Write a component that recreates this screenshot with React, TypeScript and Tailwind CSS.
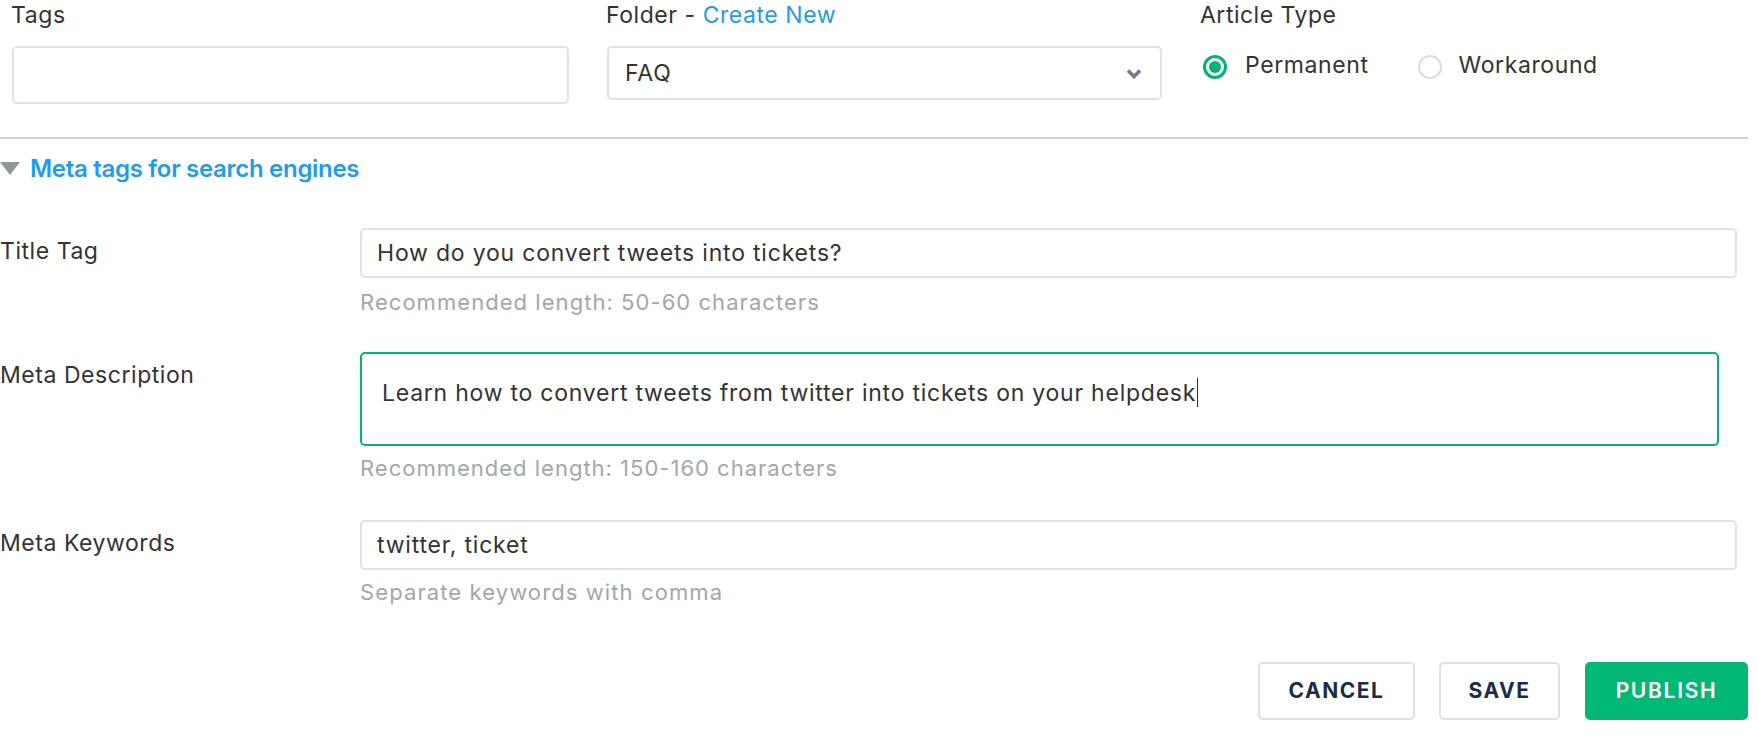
function Radio({ checked }: { checked?: boolean }) {
  if (checked) {
    return (
      <div className="flex h-[24px] w-[24px] items-center justify-center rounded-full border-[3px] border-[#00b574]">
        <div className="h-[12px] w-[12px] rounded-full bg-[#00b574]" />
      </div>
    );
  }
  return <div className="h-[24px] w-[24px] rounded-full border-2 border-[#d9dee3]" />;
}

function FormRow({ label, children }: { label: string; children: React.ReactNode }) {
  return (
    <div className="flex">
      <div className="w-[360px] pt-[8px] text-[23px] leading-[30px] tracking-[0.55px] text-[#333]">{label}</div>
      <div>{children}</div>
    </div>
  );
}

export default function App() {
  return (
    <div className="w-[1748px] bg-white font-['Inter','Noto_Sans',sans-serif] text-[#333]">
      {/* top row */}
      <div className="flex">
        <div className="w-[606px] pl-[11px]">
          <div className="h-[30px] text-[23px] leading-[30px] tracking-[0.6px]">Tags</div>
          <input
            readOnly
            className="ml-px mt-[16px] h-[58px] w-[557px] rounded-[5px] border-2 border-[#dfe3e7] outline-none"
          />
        </div>
        <div className="w-[594px]">
          <div className="h-[30px] text-[23px] leading-[30px] tracking-[0.55px]">
            Folder - <span className="text-[#1f9bf0]">Create New</span>
          </div>
          <div className="ml-[1px] mt-[16px] flex h-[54px] w-[555px] items-center justify-between rounded-[5px] border-2 border-[#dfe3e7] pl-[16px] pr-[18px]">
            <span className="text-[23px] tracking-[0.8px] text-[#333]">FAQ</span>
            <svg width="16" height="11" viewBox="0 0 16 11">
              <path d="M2 2.5 L8 8.5 L14 2.5" fill="none" stroke="#6f7d8b" strokeWidth="3.6" />
            </svg>
          </div>
        </div>
        <div className="flex-1">
          <div className="h-[30px] text-[23px] leading-[30px] tracking-[0.5px]">Article Type</div>
          <div className="mt-[25px] flex h-[24px] items-center pl-[3px] text-[23px] tracking-[0.6px]">
            <Radio checked />
            <span className="ml-[18px] -translate-y-[2px]">Permanent</span>
            <div className="ml-[49px]">
              <Radio />
            </div>
            <span className="ml-[17px] -translate-y-[2px]">Workaround</span>
          </div>
        </div>
      </div>

      <div className="mt-[33px] h-[2px] bg-[#d2d2d2]" />

      {/* meta toggle */}
      <div className="mt-[15px] flex h-[30px] items-center">
        <svg width="20" height="14" viewBox="0 0 20 14">
          <polygon points="0,0 20,0 10,13" fill="#8e9696" />
        </svg>
        <span className="ml-[10px] text-[24px] font-semibold tracking-[-0.3px] text-[#1f9bf0]">
          Meta tags for search engines
        </span>
      </div>

      <div className="mt-[44px]">
        <FormRow label="Title Tag">
          <input
            readOnly
            value="How do you convert tweets into tickets?"
            className="h-[50px] w-[1377px] rounded-[5px] border-2 border-[#dfe3e7] px-[15px] text-[23px] tracking-[0.8px] text-[#333] outline-none"
          />
          <div className="mt-[10px] text-[22px] leading-[28px] tracking-[1.05px] text-[#a1a7ad]">
            Recommended length: 50-60 characters
          </div>
        </FormRow>
      </div>

      <div className="mt-[36px]">
        <FormRow label="Meta Description">
          <div className="h-[94px] w-[1359px] rounded-[5px] border-2 border-[#00b574] pl-[20px] pt-[18px] text-[23px] leading-[30px] tracking-[0.76px] text-[#333]">
            Learn how to convert tweets from twitter into tickets on your helpdesk
            <span className="ml-px inline-block h-[29px] w-px translate-y-[6px] bg-[#333]" />
          </div>
          <div className="mt-[8px] text-[22px] leading-[28px] tracking-[1px] text-[#a1a7ad]">
            Recommended length: 150-160 characters
          </div>
        </FormRow>
      </div>

      <div className="mt-[38px]">
        <FormRow label="Meta Keywords">
          <input
            readOnly
            value="twitter, ticket"
            className="h-[50px] w-[1377px] rounded-[5px] border-2 border-[#dfe3e7] px-[15px] text-[23px] tracking-[0.8px] text-[#333] outline-none"
          />
          <div className="mt-[8px] text-[22px] leading-[28px] tracking-[1.1px] text-[#a1a7ad]">
            Separate keywords with comma
          </div>
        </FormRow>
      </div>

      {/* actions */}
      <div className="mt-[56px] flex justify-end gap-[24px] pb-[19px]">
        <button className="h-[58px] w-[157px] rounded-[5px] border-2 border-[#dce1e6] text-[21px] font-bold tracking-[1.5px] text-[#1b2d45]">
          CANCEL
        </button>
        <button className="h-[58px] w-[121px] rounded-[5px] border-2 border-[#dce1e6] text-[21px] font-bold tracking-[1.5px] text-[#1b2d45]">
          SAVE
        </button>
        <button className="ml-px h-[58px] w-[163px] rounded-[5px] bg-[#02b875] text-[21px] font-semibold tracking-[1.7px] text-white">
          PUBLISH
        </button>
      </div>
    </div>
  );
}
